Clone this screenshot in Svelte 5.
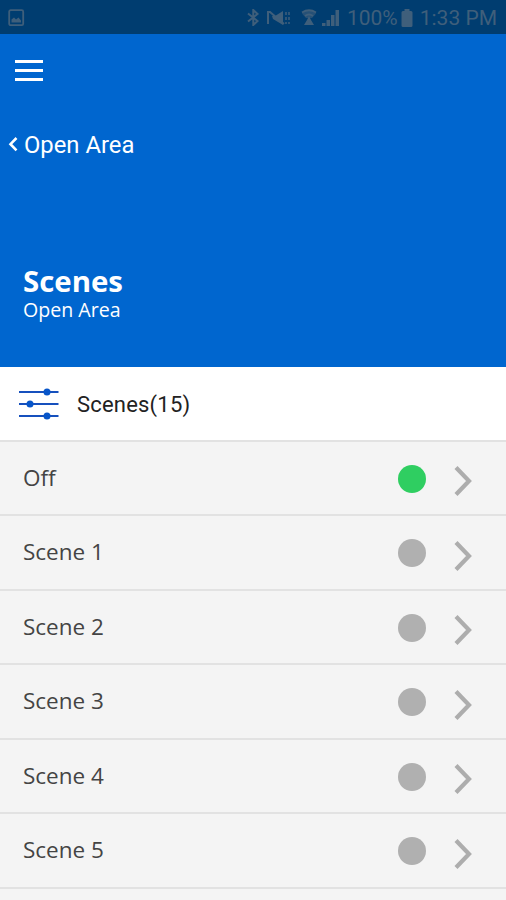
<script lang="ts">
  const area = 'Open Area';

  const scenes = [
    'Off',
    ...Array.from({ length: 14 }, (_, i) => `Scene ${i + 1}`),
  ];

  let active = $state('Off');
</script>

<div class="screen">
  <div class="status-bar">
    <svg class="shot" width="17" height="18" viewBox="0 0 17 18">
      <rect x="1.2" y="1.2" width="14" height="15" rx="1.5" fill="none" stroke="currentColor" stroke-width="1.8" />
      <path d="M3.5 13.5v-3l2.5-2 2 2 2.5-2 2.5 3v2z" fill="currentColor" />
    </svg>

    <div class="status-icons">
      <svg class="bluetooth" width="13" height="17" viewBox="0 0 13 17">
        <path d="M1 4.5l9.5 7.5-4.2 4V1l4.2 4L1 12.5" fill="none" stroke="currentColor" stroke-width="2" />
      </svg>
      <svg class="mute" width="25" height="16" viewBox="0 0 25 16">
        <path d="M2 14V2h2l14 12" fill="none" stroke="currentColor" stroke-width="2" />
        <path d="M6 6h3l8-5v14L7 9z" fill="currentColor" />
        <path d="M20 2v3m0 2v3m0 2v2M23 2v3m0 2v3m0 2v2" stroke="currentColor" stroke-width="1.5" />
      </svg>
      <svg class="wifi" width="16" height="17" viewBox="0 0 16 17">
        <path d="M1 4.5Q8-2 15 4.5L11 9H5z" fill="currentColor" opacity="0.6" />
        <path d="M1 3.5Q8-1 15 3.5M4 7q4-3 8 0" fill="none" stroke="currentColor" stroke-width="1.8" />
        <path d="M8 7l2 4 3 5H3l3-5z" fill="currentColor" />
      </svg>
      <svg class="signal" width="18" height="18" viewBox="0 0 18 18">
        <path d="M0 14h3.5v3H0zM4.500 11h3.5v6h-3.5zM9 6h3.5v11H9zM13.5 1h3.5v16h-3.5z" fill="currentColor" />
      </svg>
      <span class="percent">100%</span>
      <svg class="battery" width="12" height="18" viewBox="0 0 12 18">
        <path d="M3.5 0h5v2H10q1.5 0 1.5 1.5v13Q11.5 18 10 18H2Q.5 18 .5 16.5v-13Q.5 2 2 2h1.5z" fill="currentColor" />
      </svg>
      <span class="clock">1:33 PM</span>
    </div>
  </div>

  <header>
    <button class="menu" aria-label="Menu">
      <span></span>
      <span></span>
      <span></span>
    </button>

    <button class="back">
      <svg width="10" height="16" viewBox="0 0 10 16">
        <path d="M8.5 1L2.5 7.200l6 6.200" fill="none" stroke="currentColor" stroke-width="2.6" />
      </svg>
      <span>{area}</span>
    </button>

    <h1>Scenes</h1>
    <p class="subtitle">{area}</p>
  </header>

  <div class="section">
    <svg width="40" height="32" viewBox="0 0 40 32">
      <path d="M0 4h39.5M0 16h39.5M0 28h39.5" stroke="#1650bd" stroke-width="2.2" />
      <g fill="#0755c9">
        <circle cx="28" cy="4" r="3.5" />
        <circle cx="11" cy="16" r="3.5" />
        <circle cx="28" cy="28" r="3.5" />
      </g>
    </svg>
    <span>Scenes({scenes.length})</span>
  </div>

  <div class="list">
    {#each scenes as scene}
      <button class="row" onclick={() => (active = scene)}>
        <span class="name">{scene}</span>
        <span class="dot" class:on={active === scene}></span>
        <svg class="chevron" width="18" height="30" viewBox="0 0 18 30">
          <path d="M2 1.5L15 15 2 28.5" fill="none" stroke="#adadad" stroke-width="4.2" />
        </svg>
      </button>
    {/each}
  </div>
</div>

<style>
  :global(body) {
    margin: 0;
    background: #f4f4f4;
  }

  .screen {
    height: 900px;
    overflow: hidden;
    display: flex;
    flex-direction: column;
    background: #f4f4f4;
    font-family: "Open Sans", "Noto Sans", sans-serif;
  }

  button {
    background: none;
    border: none;
    padding: 0;
    margin: 0;
    color: inherit;
    font: inherit;
    text-align: left;
    cursor: pointer;
  }

  svg {
    display: block;
    flex: none;
  }

  .status-bar {
    flex: none;
    box-sizing: border-box;
    height: 34px;
    padding: 1px 9px 0 8px;
    display: flex;
    align-items: center;
    justify-content: space-between;
    background: #003d70;
    color: #3f5f7b;
    font-family: Roboto, sans-serif;
    font-size: 21px;
    line-height: 34px;
  }

  .status-icons {
    display: flex;
    align-items: center;
    white-space: nowrap;
  }

  .mute {
    margin-left: 6px;
  }

  .wifi {
    margin-left: 10px;
  }

  .signal {
    margin-left: 5px;
  }

  .percent {
    margin-left: 7px;
  }

  .battery {
    margin-left: 3px;
  }

  .clock {
    margin-left: 7px;
  }

  .percent,
  .clock {
    padding-top: 1px;
  }

  header {
    flex: none;
    box-sizing: border-box;
    height: 332.5px;
    padding-top: 26px;
    background: #0066cf;
    color: #fff;
  }

  .menu {
    display: flex;
    flex-direction: column;
    gap: 6px;
    width: 28.5px;
    margin-left: 14.5px;
  }

  .menu span {
    height: 3px;
    background: #fff;
  }

  .back {
    display: flex;
    align-items: center;
    gap: 6px;
    margin: 49px 0 0 8px;
    height: 30px;
    font-family: Roboto, sans-serif;
    font-size: 23.8px;
    line-height: 30px;
  }

  h1 {
    margin: 104px 0 0 23px;
    font-size: 29.4px;
    font-weight: 700;
    line-height: 34px;
  }

  .subtitle {
    margin: 0 0 0 23px;
    font-size: 19.6px;
    line-height: 24px;
  }

  .section {
    flex: none;
    box-sizing: border-box;
    height: 75px;
    padding: 2px 0 0 19px;
    display: flex;
    align-items: center;
    gap: 18px;
    background: #fff;
    border-bottom: 2px solid #e2e2e2;
    color: #222;
    font-family: Roboto, sans-serif;
    font-size: 22px;
    letter-spacing: 0.2px;
  }

  .list {
    flex: 1;
    min-height: 0;
    overflow-y: auto;
    scrollbar-width: none;
  }

  .row {
    box-sizing: border-box;
    width: 100%;
    height: 74.5px;
    padding: 0 34px 0 23px;
    display: flex;
    align-items: center;
    border-bottom: 2px solid #e2e2e2;
    color: #444;
    font-size: 22.5px;
  }

  .name {
    flex: 1;
    margin-top: -1px;
  }

  .dot {
    width: 28px;
    height: 28px;
    margin-top: 2px;
    border-radius: 50%;
    background: #b0b0b0;
  }

  .dot.on {
    background: #2fce61;
  }

  .chevron {
    margin: 7px 0 0 28px;
  }
</style>
